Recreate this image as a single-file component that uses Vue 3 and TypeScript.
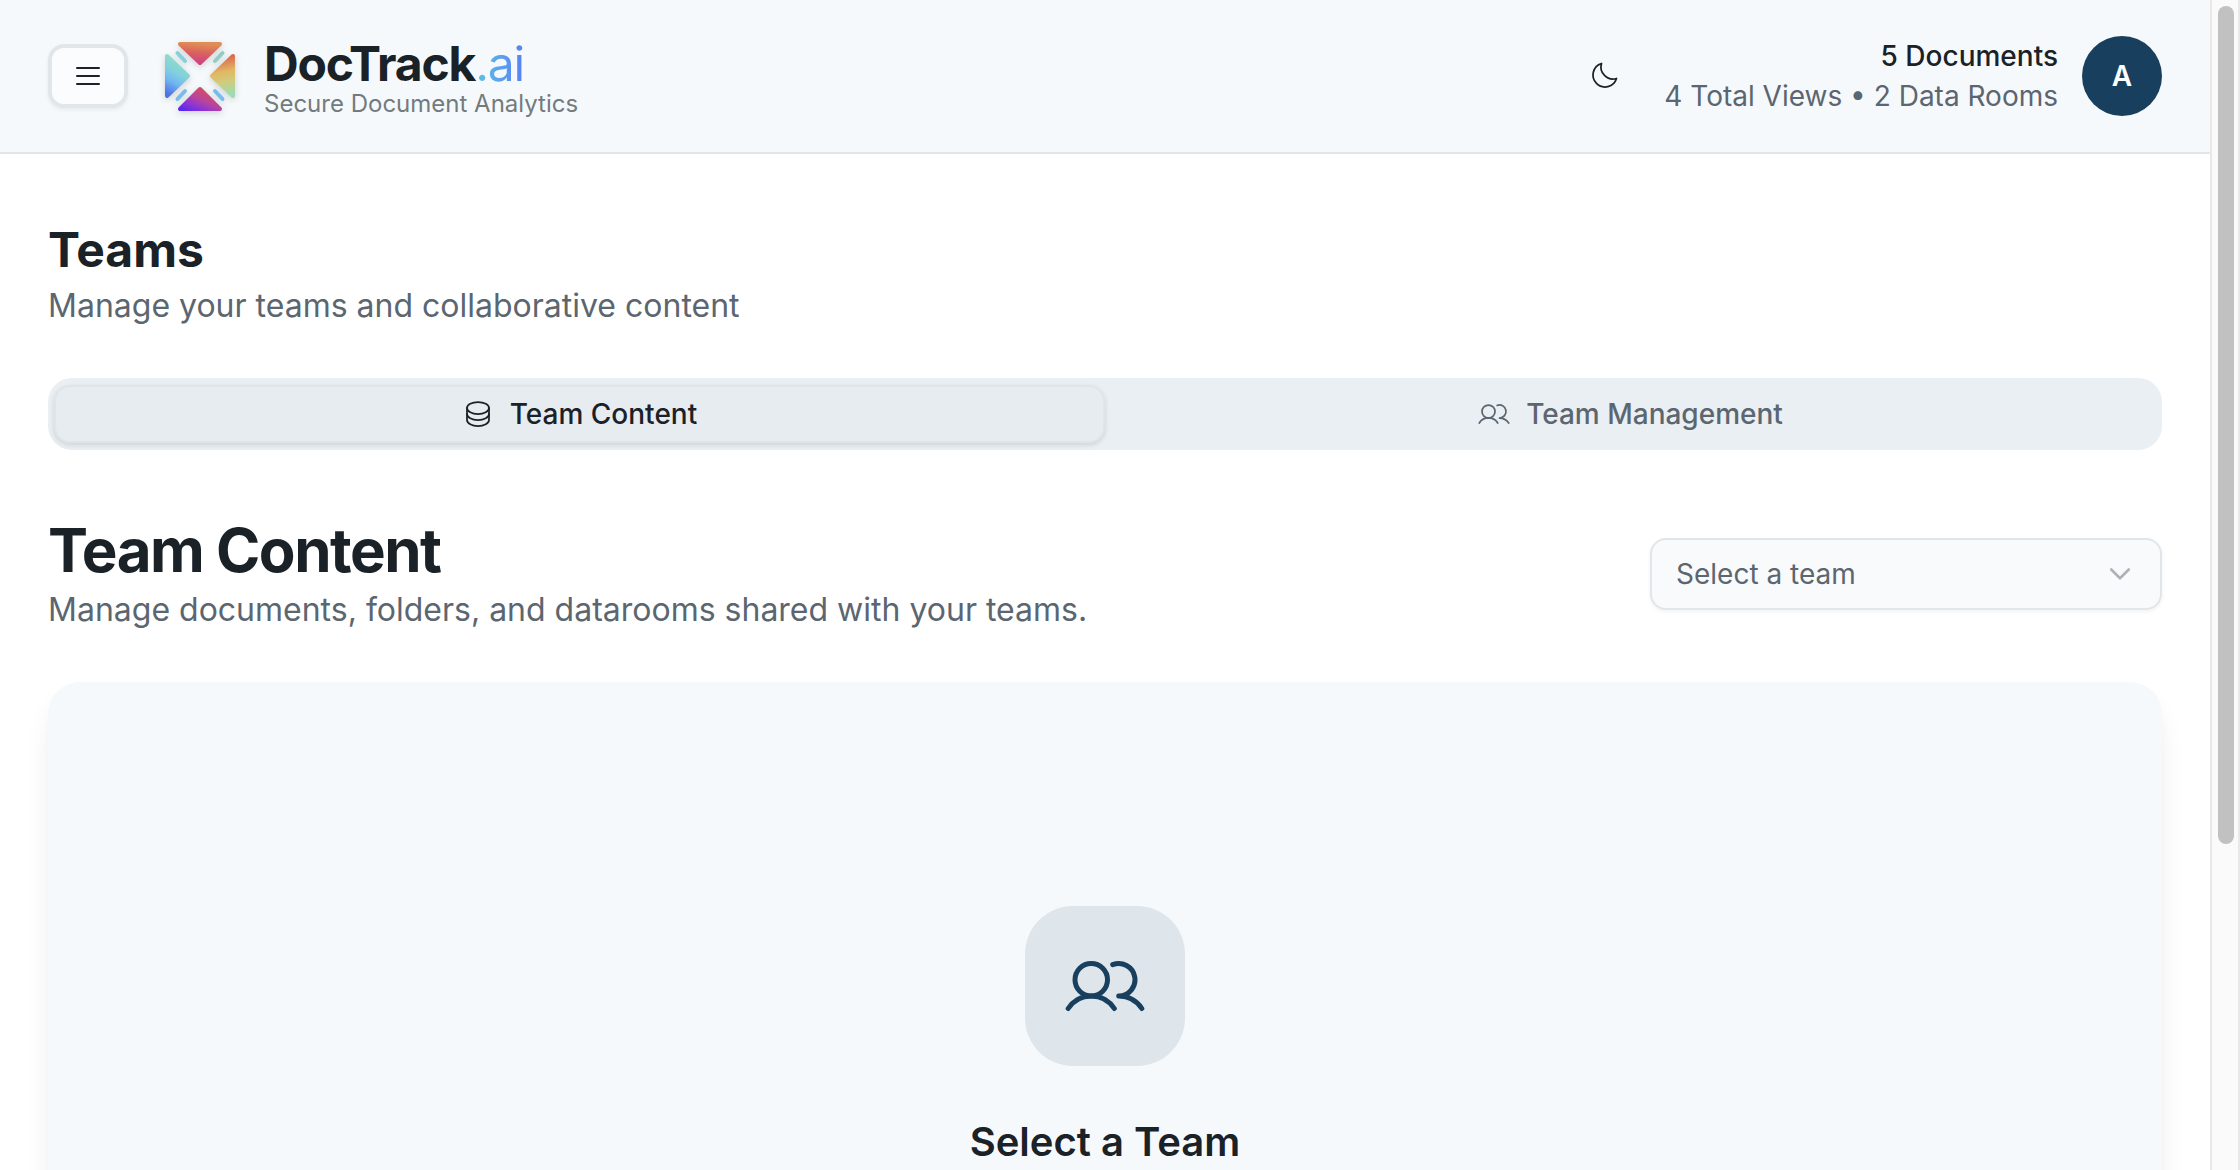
<script setup lang="ts">
import { ref } from 'vue'

type TabId = 'content' | 'management'

const activeTab = ref<TabId>('content')
const team = ref('')
</script>

<template>
  <div class="window">
    <div class="page">
      <header class="topbar">
        <button class="menu" type="button" aria-label="Open menu">
          <svg class="icon" viewBox="0 0 256 256"><path d="M40 64H216M40 128H216M40 192H216" /></svg>
        </button>
        <a class="brand" href="#">
          <svg class="logo" viewBox="0 0 80 80" aria-hidden="true">
            <defs>
              <linearGradient id="top" x1="0.6" y1="0" x2="0.4" y2="1"><stop offset="0" stop-color="#df8d55" /><stop offset="0.5" stop-color="#d9605f" /><stop offset="1" stop-color="#cf4187" /></linearGradient>
              <linearGradient id="left" x1="0.5" y1="0" x2="0.2" y2="1"><stop offset="0" stop-color="#90dfc4" /><stop offset="0.4" stop-color="#83d0dc" /><stop offset="0.65" stop-color="#70b8f2" /><stop offset="1" stop-color="#4c73e4" /></linearGradient>
              <linearGradient id="right" x1="0.6" y1="0" x2="0.7" y2="1"><stop offset="0" stop-color="#d9634f" /><stop offset="0.38" stop-color="#e2b761" /><stop offset="0.65" stop-color="#cfcd7d" /><stop offset="1" stop-color="#9addb4" /></linearGradient>
              <linearGradient id="bottom" x1="0" y1="1" x2="0.7" y2="0.2"><stop offset="0" stop-color="#5a28f0" /><stop offset="0.3" stop-color="#8634d8" /><stop offset="0.65" stop-color="#b8449c" /><stop offset="1" stop-color="#cf4b70" /></linearGradient>
            </defs>
            <g stroke-width="4" stroke-linejoin="round">
              <path d="M20 8H60L40 27Z" fill="url(#top)" stroke="url(#top)" />
              <path d="M7 20V60L28 40Z" fill="url(#left)" stroke="url(#left)" />
              <path d="M73 20V60L52 40Z" fill="url(#right)" stroke="url(#right)" />
              <path d="M20 73H60L40 53Z" fill="url(#bottom)" stroke="url(#bottom)" />
            </g>
            <g stroke-width="4" stroke-linecap="round" fill="none">
              <path d="M17.500 17L25 25" stroke="#86cfdc" />
              <path d="M62.500 17L55 25" stroke="#8fcfc1" />
              <path d="M17.500 63L25 55" stroke="#76bdec" />
              <path d="M62.500 63L55 55" stroke="#76bdec" />
            </g>
          </svg>
          <span class="brand-text">
            <span class="name">DocTrack<span class="suffix">.ai</span></span>
            <span class="tagline">Secure Document Analytics</span>
          </span>
        </a>
        <div class="account">
          <button class="theme" type="button" aria-label="Toggle dark mode">
            <svg class="icon light" viewBox="0 0 256 256"><path d="M108.110 28.110A96.090 96.090 0 0 0 227.890 147.890A96 96 0 1 1 108.110 28.110Z" /></svg>
          </button>
          <div class="stats">
            <strong>5 Documents</strong>
            <span>4 Total Views • 2 Data Rooms</span>
          </div>
          <button class="avatar" type="button" aria-label="Account">A</button>
        </div>
      </header>

      <main class="main">
        <section class="intro">
          <h1>Teams</h1>
          <p>Manage your teams and collaborative content</p>
        </section>

        <div class="tabs" role="tablist">
          <button class="tab" :class="{ active: activeTab === 'content' }" type="button" role="tab" :aria-selected="activeTab === 'content'" @click="activeTab = 'content'">
            <svg class="icon light" viewBox="0 0 256 256">
              <ellipse cx="128" cy="80" rx="88" ry="48" />
              <path d="M40 80v48c0 26.510 39.400 48 88 48s88-21.490 88-48V80" />
              <path d="M40 128v48c0 26.510 39.400 48 88 48s88-21.490 88-48V128" />
            </svg>
            Team Content
          </button>
          <button class="tab" :class="{ active: activeTab === 'management' }" type="button" role="tab" :aria-selected="activeTab === 'management'" @click="activeTab = 'management'">
            <svg class="icon light" viewBox="0 0 256 256">
              <circle cx="84" cy="108" r="52" />
              <path d="M10.230 200a88 88 0 0 1 147.540 0M172 160a87.930 87.930 0 0 1 73.770 40M152.690 59.700A52 52 0 1 1 172 160" />
            </svg>
            Team Management
          </button>
        </div>

        <section class="section-head">
          <div>
            <h2>Team Content</h2>
            <p>Manage documents, folders, and datarooms shared with your teams.</p>
          </div>
          <div class="picker">
            <select v-model="team" aria-label="Team">
              <option value="">Select a team</option>
            </select>
            <svg class="icon caret" viewBox="0 0 256 256"><path d="M208 96L128 176L48 96" /></svg>
          </div>
        </section>

        <section class="card">
          <div class="tile">
            <svg class="icon" viewBox="0 0 256 256">
              <circle cx="84" cy="108" r="52" />
              <path d="M10.230 200a88 88 0 0 1 147.540 0M172 160a87.930 87.930 0 0 1 73.770 40M152.690 59.700A52 52 0 1 1 172 160" />
            </svg>
          </div>
          <h3>Select a Team</h3>
        </section>
      </main>
    </div>
    <div class="scrollbar" aria-hidden="true"><div class="thumb"></div></div>
  </div>
</template>

<style>
body {
  margin: 0;
  background: #ffffff;
}
</style>

<style scoped>
* {
  box-sizing: border-box;
}

.window {
  display: grid;
  grid-template-columns: minmax(0, 1fr) 30px;
  height: 100vh;
  overflow: hidden;
  font-family: Inter, "Liberation Sans", sans-serif;
  font-size: 28px;
  line-height: 40px;
  color: #1a2228;
}

.page {
  overflow: hidden;
}

button,
select {
  margin: 0;
  padding: 0;
  border: 0;
  background: none;
  font: inherit;
  color: inherit;
}

h1,
h2,
h3,
p {
  margin: 0;
}

.icon {
  display: block;
  flex: none;
  width: 32px;
  height: 32px;
  fill: none;
  stroke: currentColor;
  stroke-width: 16;
  stroke-linecap: round;
  stroke-linejoin: round;
}

.icon.light {
  stroke-width: 14;
}

.topbar {
  display: flex;
  align-items: center;
  gap: 32px;
  padding: 36px 48px;
  border-bottom: 2px solid #e1e6ea;
  background: #f5f9fc;
}

.menu {
  display: grid;
  place-items: center;
  width: 80px;
  height: 64px;
  border: 4px solid #e1e6ea;
  border-radius: 16px;
  background: #fafcfe;
  box-shadow: 0 2px 4px rgba(0, 0, 0, 0.06);
}

.brand {
  display: flex;
  align-items: center;
  gap: 24px;
  color: inherit;
  text-decoration: none;
}

.logo {
  width: 80px;
  height: 80px;
  filter: drop-shadow(0 2px 3px rgba(0, 0, 0, 0.16));
}

.brand-text {
  display: flex;
  flex-direction: column;
}

.name {
  font-size: 48px;
  line-height: 56px;
  font-weight: 700;
  letter-spacing: -0.025em;
}

.suffix {
  font-weight: 400;
  background: linear-gradient(90deg, #5cc3e0, #5b9cf0 60%, #5580f5);
  -webkit-background-clip: text;
  background-clip: text;
  color: transparent;
}

.tagline {
  font-size: 24px;
  line-height: 24px;
  color: #737b7e;
}

.account {
  display: flex;
  align-items: center;
  gap: 24px;
  margin-left: auto;
}

.theme {
  display: grid;
  place-items: center;
  width: 72px;
  height: 64px;
}

.stats {
  display: flex;
  flex-direction: column;
  text-align: right;
}

.stats strong {
  font-weight: 500;
}

.stats span,
p {
  color: #5b6670;
}

.avatar {
  width: 80px;
  height: 80px;
  border-radius: 50%;
  background: #183f5e;
  color: #ffffff;
  font-weight: 600;
}

.main {
  padding: 64px 48px;
}

.intro {
  margin-bottom: 48px;
}

p {
  font-size: 32px;
  line-height: 48px;
}

h1 {
  font-size: 48px;
  line-height: 64px;
  font-weight: 700;
}

.tabs {
  display: grid;
  grid-template-columns: 1fr 1fr;
  padding: 7px 6px;
  border-radius: 24px;
  background: #eaeff3;
}

.tab {
  display: flex;
  align-items: center;
  justify-content: center;
  gap: 16px;
  height: 58px;
  border: 2px solid transparent;
  border-radius: 16px;
  font-weight: 500;
  color: #5b6670;
}

.tab.active {
  border-color: #e0e5e9;
  background: #e7ecf0;
  color: #1a2228;
  box-shadow: 0 2px 5px rgba(0, 0, 0, 0.12);
}

.section-head {
  display: flex;
  align-items: center;
  justify-content: space-between;
  margin: 64px 0 48px;
}

h2 {
  font-size: 60px;
  line-height: 72px;
  font-weight: 700;
  letter-spacing: -0.025em;
}

.picker {
  position: relative;
  width: 512px;
}

.picker select {
  display: block;
  width: 100%;
  height: 72px;
  padding: 0 24px;
  border: 2px solid #e0e6ea;
  border-radius: 16px;
  appearance: none;
  background: #f9fafc;
  color: #5b6670;
  box-shadow: 0 2px 4px rgba(0, 0, 0, 0.05);
}

.caret {
  position: absolute;
  top: 21px;
  right: 28px;
  width: 28px;
  height: 28px;
  color: #adb2b6;
  stroke-width: 24;
  pointer-events: none;
}

.card {
  display: flex;
  flex-direction: column;
  align-items: center;
  padding: 224px 48px;
  border-radius: 32px;
  background: #f5f9fc;
  box-shadow: 0 20px 30px -6px rgba(0, 0, 0, 0.1), 0 8px 12px -8px rgba(0, 0, 0, 0.1);
}

.tile {
  display: grid;
  place-items: center;
  width: 160px;
  height: 160px;
  margin-bottom: 48px;
  border-radius: 48px;
  background: #dee5eb;
  color: #183f5e;
}

.tile .icon {
  width: 80px;
  height: 80px;
}

h3 {
  font-size: 40px;
  line-height: 56px;
  font-weight: 600;
}

.scrollbar {
  padding: 6px 4px 0 6px;
  border: solid #e8e8e8;
  border-width: 0 2px;
  background: #fafafa;
}

.thumb {
  height: 72%;
  border-radius: 8px;
  background: #c1c1c1;
}
</style>
